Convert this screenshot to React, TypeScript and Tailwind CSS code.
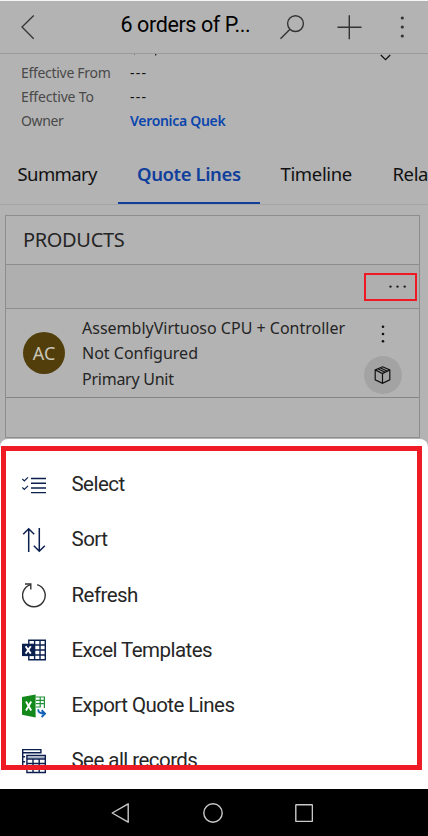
import type { ReactNode } from "react";

const ink = "#0b1f4f";

function SelectIcon() {
  return (
    <svg width="24" height="20" viewBox="0 0 24 20" fill="none" stroke={ink} strokeWidth="1.4">
      <path d="M9 3.5h15M9 8.3h15M9 13h15M9 17.6h15" />
      <path d="M.3 4l2 2L6 2.3M.3 12.5l2 2L6 10.8" strokeWidth="1.2" />
    </svg>
  );
}

function SortIcon() {
  return (
    <svg width="24" height="26" viewBox="0 0 24 26" fill="none" stroke={ink} strokeWidth="1.5">
      <path d="M6.7 25V2M1.2 7.3L6.7 1.8l5.5 5.5M17.3 1v23M11.8 18.7l5.5 5.5 5.5-5.5" />
    </svg>
  );
}

function RefreshIcon() {
  return (
    <svg width="24" height="26" viewBox="0 0 24 26" fill="none" stroke="#333" strokeWidth="1.4">
      <path d="M8.6 2.6A11.3 11.3 0 1 0 15.2 2.6" />
      <path d="M3 2h5.8v5.4" />
    </svg>
  );
}

function ExcelIcon() {
  return (
    <svg width="24" height="22" viewBox="0 0 24 22" fill="none">
      <path d="M6.8 1.2h16.5v19.6H6.8zM6.8 6h16.5M6.8 11h16.5M6.8 16h16.5M12.6 1v20M18 1v20" stroke={ink} strokeWidth="1.4" />
      <path d="M0 4.7h12.3v12.4H0z" fill={ink} />
      <path d="M3.6 7.3l5.2 7.3M8.8 7.3l-5.2 7.3" stroke="#fff" strokeWidth="1.9" />
    </svg>
  );
}

function ExportIcon() {
  return (
    <svg width="24" height="24" viewBox="0 0 24 24" fill="none">
      <path d="M13.5 3h8.9v11M14 6.3h8.4M14 9.7h8.4M14 13h4M18.2 3v10.5" stroke="#219139" strokeWidth="1.2" />
      <path d="M0 3L13.6.5v23L0 20.7z" fill="#13881b" />
      <path d="M4 7.6l5.2 8.8M9.2 7.6L4 16.4" stroke="#fff" strokeWidth="1.9" />
      <path d="M16.2 15.2c0 3.3 1.7 4.4 6.5 4.4M19.6 16.2l3.5 3.4-3.5 3.4" stroke="#1261b5" strokeWidth="1.9" />
    </svg>
  );
}

function RecordsIcon() {
  return (
    <svg width="24" height="26" viewBox="0 0 24 26" fill="none" stroke={ink} strokeWidth="1.4">
      <path d="M3 4.7H.6M.7 19V1.6h18.2v3.1H1M.6 8.7h2.5M.6 13.7h2.5" />
      <path d="M4.9 7.4h18.4v17.1H4.9zM4.9 11h18.4M4.9 15.5h18.4M4.9 20h18.4M11 11v13.5M17.2 11v13.5" />
      <path d="M4.9 9.2h18.4" strokeWidth="2.2" opacity=".35" />
    </svg>
  );
}

function MenuRow({ icon, label, tracking }: { icon: ReactNode; label: string; tracking: string }) {
  return (
    <li className="flex h-[55.25px] shrink-0 items-center pl-[22px]">
      <span className="flex w-6 shrink-0 items-center justify-center">{icon}</span>
      <span className={`ml-[25.5px] pb-px text-[20.5px] leading-6 whitespace-nowrap text-[#262626] ${tracking}`}>{label}</span>
    </li>
  );
}

function Field({ label, children, tracking }: { label: string; children: ReactNode; tracking: string }) {
  return (
    <div className="flex h-6 items-center pl-[21px] text-[14px]">
      <span className={`w-[109px] text-[#494949] ${tracking}`}>{label}</span>
      {children}
    </div>
  );
}

export default function App() {
  return (
    <div className="relative flex h-[836px] w-[428px] flex-col overflow-hidden bg-[#b3b3b3] font-['Noto_Sans','Open_Sans',sans-serif] text-[#111]">
      <header className="flex h-[54px] shrink-0 items-center border-t border-b border-t-[#f5f5f5] border-b-[#9b9b9b]">
        <svg className="ml-[21px] shrink-0" width="14" height="26" viewBox="0 0 14 26" fill="none" stroke="#333" strokeWidth="1.3">
          <path d="M12.7 1.5L1 13l11.7 11.7" />
        </svg>
        <h1 className="ml-[85.5px] w-[159px] shrink-0 pb-[4px] font-[Roboto,sans-serif] text-[21.5px] leading-7 tracking-[-0.4px] whitespace-nowrap text-black">
          6 orders of P...
        </h1>
        <svg className="shrink-0" width="25" height="26" viewBox="0 0 25 26" fill="none" stroke="#333" strokeWidth="1.4">
          <circle cx="15.5" cy="9.6" r="7.9" />
          <path d="M10 15.2L.5 24.8" />
        </svg>
        <svg className="ml-8 shrink-0" width="25" height="26" viewBox="0 0 25 26" fill="none" stroke="#333" strokeWidth="1.4">
          <path d="M.5 13.2h24M12.3 1.2v24" />
        </svg>
        <svg className="ml-[37px] shrink-0" width="6" height="26" viewBox="0 0 6 26" fill="#333">
          <circle cx="3.3" cy="4" r="1.6" />
          <circle cx="3.3" cy="13" r="1.6" />
          <circle cx="3.3" cy="22" r="1.6" />
        </svg>
      </header>

      <section className="flex h-[92px] shrink-0 flex-col">
        <div className="flex h-[6px] shrink-0 items-start justify-between">
          <svg className="ml-[133px]" width="24" height="2" viewBox="0 0 24 2">
            <path d="M1 0h1v1H1z" fill="#777" />
            <path d="M22 0h1.3v1.6H22z" fill="#222" />
          </svg>
          <svg className="mr-[36px] shrink-0" width="13" height="7" viewBox="0 0 13 7" fill="none" stroke="#111" strokeWidth="1.3">
            <path d="M1.8 1l4.7 4.6L11.2 1" />
          </svg>
        </div>
        <Field label="Effective From" tracking="tracking-[-0.3px]">
          <span className="tracking-[1.2px]">---</span>
        </Field>
        <Field label="Effective To" tracking="tracking-[-0.15px]">
          <span className="tracking-[1.2px]">---</span>
        </Field>
        <Field label="Owner" tracking="tracking-[-0.4px]">
          <span className="font-semibold tracking-[-0.3px] text-[#0a45ad]">Veronica Quek</span>
        </Field>
      </section>

      <nav className="flex h-[59px] shrink-0 items-stretch overflow-hidden border-b border-[#a5a5a5] text-[18.5px] whitespace-nowrap">
        <span className="w-[117.5px] shrink-0 pt-[14px] pl-[17.5px] leading-7 tracking-[-0.6px]">Summary</span>
        <span className="w-[142.5px] shrink-0 border-b-2 border-[#103f9c] pt-[14px] pl-[19.5px] leading-7 font-semibold tracking-[-0.4px] text-[#103f9c]">Quote Lines</span>
        <span className="w-[132.5px] shrink-0 pt-[14px] pl-[20.5px] leading-7 tracking-[-0.35px]">Timeline</span>
        <span className="shrink-0 pt-[14px] leading-7 tracking-[-0.4px]">Rela</span>
      </nav>

      <section className="mt-[10px] ml-[5px] flex h-[223px] w-[415px] shrink-0 flex-col border border-[#8d8d8d] text-[#252525]">
        <h2 className="flex h-[48.5px] shrink-0 items-center border-b border-[#8d8d8d] pt-px pl-[17px] text-[20px] tracking-[-0.35px]">PRODUCTS</h2>
        <div className="flex h-[44.5px] shrink-0 items-center justify-end border-b border-[#8d8d8d] bg-[#afafaf] pt-px pr-[2px]">
          <div className="flex h-[28px] w-[53px] items-center justify-end border-2 border-[#f01822] pr-[7px]">
            <svg width="20" height="4" viewBox="0 0 20 4" fill="#222">
              <circle cx="2.5" cy="1.6" r="1.2" />
              <circle cx="9.5" cy="1.6" r="1.2" />
              <circle cx="16.7" cy="1.6" r="1.2" />
            </svg>
          </div>
        </div>
        <div className="flex h-[89px] shrink-0 items-center border-b border-[#858585] pl-[17px]">
          <span className="flex size-[42px] shrink-0 items-center justify-center rounded-full bg-[#513e0a] text-[18px] tracking-[0.1px] text-[#c9c5b9]">AC</span>
          <div className="ml-[17px] w-[281px] shrink-0 pt-[2px] text-[16px] leading-[25.3px] whitespace-nowrap">
            <p>AssemblyVirtuoso CPU + Controller</p>
            <p>Not Configured</p>
            <p className="tracking-[-0.25px]">Primary Unit</p>
          </div>
          <div className="flex w-[39px] shrink-0 flex-col items-center gap-[12px] pt-[12px]">
            <svg width="6" height="20" viewBox="0 0 6 20" fill="#111">
              <circle cx="3" cy="2.8" r="1.3" />
              <circle cx="3" cy="10" r="1.3" />
              <circle cx="3" cy="17.2" r="1.3" />
            </svg>
            <span className="flex size-[38px] items-center justify-center rounded-full bg-[#a3a3a3]">
              <svg width="18" height="20" viewBox="0 0 18 20" fill="none" stroke="#111" strokeWidth="1.2">
                <path d="M8.5 1.8l7.3 3.1v9.9l-7.3 3.5-7.3-3.5V4.9zM1.2 4.9l7.3 3.7 7.3-3.7M8.5 8.6v9.7M3.8 3.8l7.3 3.5M6.1 2.8l7.3 3.4" />
              </svg>
            </span>
          </div>
        </div>
      </section>

      <section className="mt-px flex h-[350px] shrink-0 flex-col overflow-hidden rounded-t-[8px] bg-white pt-[18px] font-[Roboto,sans-serif]">
        <ul className="flex flex-col">
          <MenuRow icon={<SelectIcon />} label="Select" tracking="tracking-[-0.55px]" />
          <MenuRow icon={<SortIcon />} label="Sort" tracking="tracking-[-0.5px]" />
          <MenuRow icon={<RefreshIcon />} label="Refresh" tracking="tracking-[-0.55px]" />
          <MenuRow icon={<ExcelIcon />} label="Excel Templates" tracking="tracking-[-0.55px]" />
          <MenuRow icon={<ExportIcon />} label="Export Quote Lines" tracking="tracking-[-0.55px]" />
          <MenuRow icon={<RecordsIcon />} label="See all records" tracking="tracking-[-0.55px]" />
        </ul>
      </section>

      <footer className="flex h-12 shrink-0 items-center bg-black">
        <svg className="ml-[111px]" width="18" height="20" viewBox="0 0 18 20" fill="none" stroke="#c9c9c9" strokeWidth="1.4" strokeLinejoin="round">
          <path d="M17.2 .8v18.4L1.2 10z" />
        </svg>
        <svg className="ml-[74px]" width="20" height="20" viewBox="0 0 20 20" fill="none" stroke="#c9c9c9" strokeWidth="1.4">
          <circle cx="10" cy="10" r="9.2" />
        </svg>
        <svg className="ml-[72px]" width="18" height="18" viewBox="0 0 18 18" fill="none" stroke="#c9c9c9" strokeWidth="1.4">
          <rect x=".8" y=".8" width="16.6" height="16.6" rx=".5" />
        </svg>
      </footer>

      {/* Highlight frame laid over the action sheet */}
      <div className="pointer-events-none absolute top-[446px] left-px h-[324px] w-[421px] border-[5px] border-[#ee1b24]" />
    </div>
  );
}
